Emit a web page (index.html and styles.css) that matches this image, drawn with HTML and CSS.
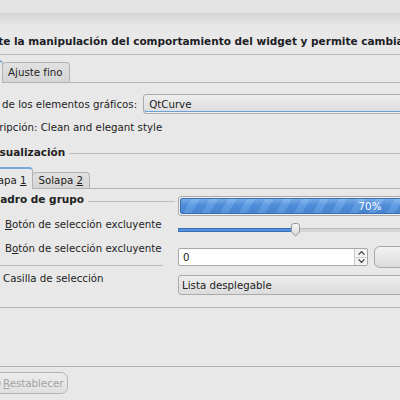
FILE: index.html
```html
<!DOCTYPE html>
<html lang="es">
<head>
    <meta charset="UTF-8">
    <meta name="viewport" content="width=device-width, initial-scale=1.0">
    <title>Estilo</title>
    <link rel="stylesheet" href="styles.css">
</head>
<body>

<div class="window">
    <div class="header"></div>
    <p class="intro">Este módulo permite la manipulación del comportamiento del widget y permite cambiar su estilo.</p>

    <div class="tabwidget outer">
        <div class="tabbar">
            <span class="tab current">Aplicaciones</span>
            <span class="tab">Ajuste fino</span>
        </div>
        <div class="pane">
            <div class="form-row">
                <label for="widgetStyle">Estilo de los elementos gráficos:</label>
                <div class="combo focused" id="widgetStyle">QtCurve</div>
            </div>
            <p class="desc">Descripción: Clean and elegant style</p>

            <div class="group">
                <div class="group-title">Visualización</div>
                <div class="group-body">
                    <div class="tabwidget inner">
                        <div class="tabbar">
                            <span class="tab current">Solapa <u>1</u></span>
                            <span class="tab">Solapa <u>2</u></span>
                        </div>
                        <div class="pane">
                            <div class="preview">
                                <div class="left">
                                    <div class="box">
                                        <div class="group-title">Cuadro de grupo</div>
                                        <div class="option first"><span class="radio checked"></span><u>B</u>otón de selección excluyente</div>
                                        <div class="option"><span class="radio"></span>B<u>o</u>tón de selección excluyente</div>
                                    </div>
                                    <div class="option check"><span class="checkbox"></span>Casilla de selección</div>
                                </div>
                                <div class="right">
                                    <div class="progress">
                                        <div class="bar" style="width: 70%"></div>
                                        <span class="progress-text">70%</span>
                                    </div>
                                    <div class="slider" style="--value: 0.3">
                                        <div class="groove"><div class="fill"></div></div>
                                        <svg class="handle" width="11" height="14" viewBox="0 0 11 14">
                                            <defs>
                                                <linearGradient id="hg" x1="0" y1="0" x2="0" y2="1">
                                                    <stop offset="0" stop-color="#f7f7f7"/>
                                                    <stop offset="1" stop-color="#d6d6d6"/>
                                                </linearGradient>
                                            </defs>
                                            <path d="M1.5 3 Q1.5 0.5 4 0.5 H7 Q9.5 0.5 9.5 3 V9 L5.5 13.2 L1.5 9 Z" fill="url(#hg)" stroke="#999"/>
                                        </svg>
                                    </div>
                                    <div class="spin-row">
                                        <div class="spinbox">
                                            <span class="value">0</span>
                                            <span class="spin-buttons">
                                                <span class="spin-btn"><svg width="7" height="4" viewBox="0 0 7 4"><path d="M0.6 3.6 L3.5 0.7 L6.4 3.6" fill="none" stroke="#333" stroke-width="1.2"/></svg></span>
                                                <span class="spin-btn"><svg width="7" height="4" viewBox="0 0 7 4"><path d="M0.6 0.4 L3.5 3.3 L6.4 0.4" fill="none" stroke="#333" stroke-width="1.2"/></svg></span>
                                            </span>
                                        </div>
                                        <button type="button" class="push">Botón</button>
                                    </div>
                                    <div class="combo plain">Lista desplegable</div>
                                </div>
                            </div>
                        </div>
                    </div>
                </div>
            </div>
        </div>
    </div>

    <div class="buttons">
        <button type="button" class="push reset" disabled>
            <svg width="16" height="16" viewBox="0 0 16 16">
                <path d="M4.2 4.2 A5.6 5.6 0 1 1 2.6 9.4" fill="none" stroke="#a2a2a2" stroke-width="1.8"/>
                <path d="M1.5 2.2 L5.8 2.4 L4.6 6.4 Z" fill="#a2a2a2"/>
            </svg>
            <span><u>R</u>establecer</span>
        </button>
    </div>
</div>

</body>
</html>
```

FILE: styles.css
```css
body {
    margin: 0;
    background: #e8e8e8;
    color: #222;
    font-family: "DejaVu Sans", "Liberation Sans", sans-serif;
    font-size: 10.25px;
    overflow: hidden;
}
.window {
    width: 740px;
    margin-left: -120px;
}
.header {
    height: 28px;
    background: linear-gradient(#e4e4e4 0, #e4e4e4 12px, #d6d6d6 14px, #e8e8e8 26px);
}
.intro {
    margin: 6px 0 0;
    padding: 0 0 6px 7px;
    line-height: 14px;
    font-size: 10.5px;
    font-weight: bold;
    color: #1d1d26;
    white-space: nowrap;
    border-bottom: 1px solid #bdbdbd;
}

/* tabs */
.tabbar {
    display: flex;
    align-items: flex-end;
}
.tab {
    padding: 0 6px 0 5px;
    border: 1px solid #b3b3b3;
    border-bottom: none;
    border-radius: 4px 4px 0 0;
    background: linear-gradient(#e1e1e1, #d5d5d5);
    white-space: nowrap;
}
.tab + .tab {
    margin-left: -1px;
}
.tab.current {
    position: relative;
    z-index: 1;
    margin-bottom: -1px;
    background: #e8e8e8;
    border-top: 2px solid #79a7df;
}
.pane {
    border: 1px solid #b3b3b3;
    border-radius: 2px;
}

.outer {
    margin: 0 10px 0 30px;
}
.outer > .tabbar {
    height: 22px;
    margin-top: 5px;
    padding-left: 16px;
}
.outer > .tabbar .tab {
    line-height: 19px;
}
.outer > .tabbar .tab.current {
    line-height: 21px;
}
.outer > .pane {
    padding: 11px 10px 58px 60px;
}

.inner {
    margin-top: 8px;
}
.inner > .tabbar {
    height: 21px;
    padding-left: 1px;
}
.inner > .tabbar .tab {
    line-height: 15px;
}
.inner > .tabbar .tab.current {
    padding-top: 2px;
    line-height: 18px;
}
.inner > .pane {
    padding: 0 9px 12px 9px;
}

/* form */
.form-row {
    display: flex;
    align-items: center;
    gap: 6px;
    height: 20px;
}
.combo {
    flex: 1;
    box-sizing: border-box;
    height: 20px;
    padding-left: 5px;
    line-height: 18px;
    border: 1px solid #ababab;
    border-radius: 3px;
    background: linear-gradient(#eeeeee, #dcdcdc);
}
.combo.focused {
    box-shadow: inset 0 -1px #f2f2f2, inset 0 -2px #6e9fdc;
}
.combo.plain {
    margin-top: 7px;
    padding-left: 3px;
}
.desc {
    margin: 6px 0 0;
    padding-left: 3px;
    line-height: 14px;
}

/* group boxes */
.group {
    margin-top: 11px;
}
.group-title {
    display: flex;
    align-items: center;
    gap: 4px;
    padding-left: 17px;
    line-height: 14px;
    font-size: 10.5px;
    font-weight: bold;
}
.group-title::after {
    content: "";
    flex: 1;
    margin-top: 2px;
    border-top: 1px solid #bdbdbd;
}
.group-body {
    padding-left: 4px;
}

/* preview */
.preview {
    display: flex;
}
.left {
    width: 190px;
    margin-right: 3px;
}
.right {
    width: 384px;
}
.box {
    padding-left: 2px;
}
.box .group-title {
    margin: 3px 0 0 -2px;
    padding-left: 0;
}
.box .group-title::after {
    margin-top: 4px;
}
.box::after {
    content: "";
    display: block;
    margin: 10px 12px 0 -2px;
    border-top: 1px solid #bdbdbd;
}
.option {
    display: flex;
    align-items: center;
    margin-top: 10px;
    line-height: 14px;
    white-space: nowrap;
}
.option.first {
    margin-top: 11px;
}
.option.check {
    margin-top: 5px;
}
.radio, .checkbox {
    flex: none;
    width: 12px;
    height: 12px;
    margin-right: 6px;
    box-sizing: border-box;
    border: 1px solid #9a9a9a;
    background: #fff;
}
.radio {
    border-radius: 50%;
}
.checkbox {
    border-radius: 2px;
}

.progress {
    position: relative;
    box-sizing: border-box;
    height: 20px;
    margin-top: 7px;
    padding: 1px;
    border: 1px solid #a9a9a9;
    border-radius: 3px;
    background: #f0f0f0;
}
.bar {
    box-sizing: border-box;
    height: 100%;
    border: 1px solid #3a6fb5;
    border-radius: 2px;
    background:
        linear-gradient(rgba(255, 255, 255, 0.25), rgba(255, 255, 255, 0) 45%, rgba(0, 0, 0, 0.06)),
        repeating-linear-gradient(120deg, #4c8cd9 0, #4c8cd9 9px, #5f9de5 9px, #5f9de5 16px);
}
.progress-text {
    position: absolute;
    left: 0;
    right: 0;
    top: 2px;
    text-align: center;
    line-height: 14px;
    color: #fff;
}

.slider {
    position: relative;
    display: flex;
    align-items: center;
    height: 14px;
    margin-top: 7px;
}
.groove {
    flex: 1;
    height: 3px;
    border-top: 1px solid #b9b9b9;
    background: #d5d5d5;
}
.fill {
    width: calc((100% - 11px) * var(--value) + 5px);
    height: 4px;
    margin-top: -1px;
    box-sizing: border-box;
    border: 1px solid #3a6fb5;
    background: #5192de;
}
.handle {
    position: absolute;
    top: 0;
    left: calc((100% - 11px) * var(--value));
}

.spin-row {
    display: flex;
    align-items: center;
    gap: 6px;
    height: 22px;
    margin-top: 9px;
}
.spinbox {
    display: flex;
    box-sizing: border-box;
    width: 190px;
    height: 18px;
    border: 1px solid #a8a8a8;
    border-radius: 2px;
    background: #fff;
}
.spinbox .value {
    flex: 1;
    padding-left: 4px;
    line-height: 16px;
}
.spin-buttons {
    display: flex;
    flex-direction: column;
    width: 12px;
    border-left: 1px solid #c9c9c9;
    background: #f3f3f3;
}
.spin-btn {
    flex: 1;
    display: flex;
    align-items: center;
    justify-content: center;
}
.spin-btn + .spin-btn {
    border-top: 1px solid #d0d0d0;
}
.push {
    flex: 1;
    height: 22px;
    border: 1px solid #a9a9a9;
    border-radius: 6px;
    background: linear-gradient(#f2f2f2, #dbdbdb);
    font: inherit;
    color: inherit;
}

.buttons {
    margin-top: 5px;
    padding-left: 100px;
}
.push.reset {
    display: flex;
    align-items: center;
    gap: 1px;
    height: 22px;
    padding: 0 4px 0 5px;
    border-color: #b4b4b4;
    border-radius: 7px;
    background: linear-gradient(#ececec, #e0e0e0);
    color: #a3a3a3;
}
```
